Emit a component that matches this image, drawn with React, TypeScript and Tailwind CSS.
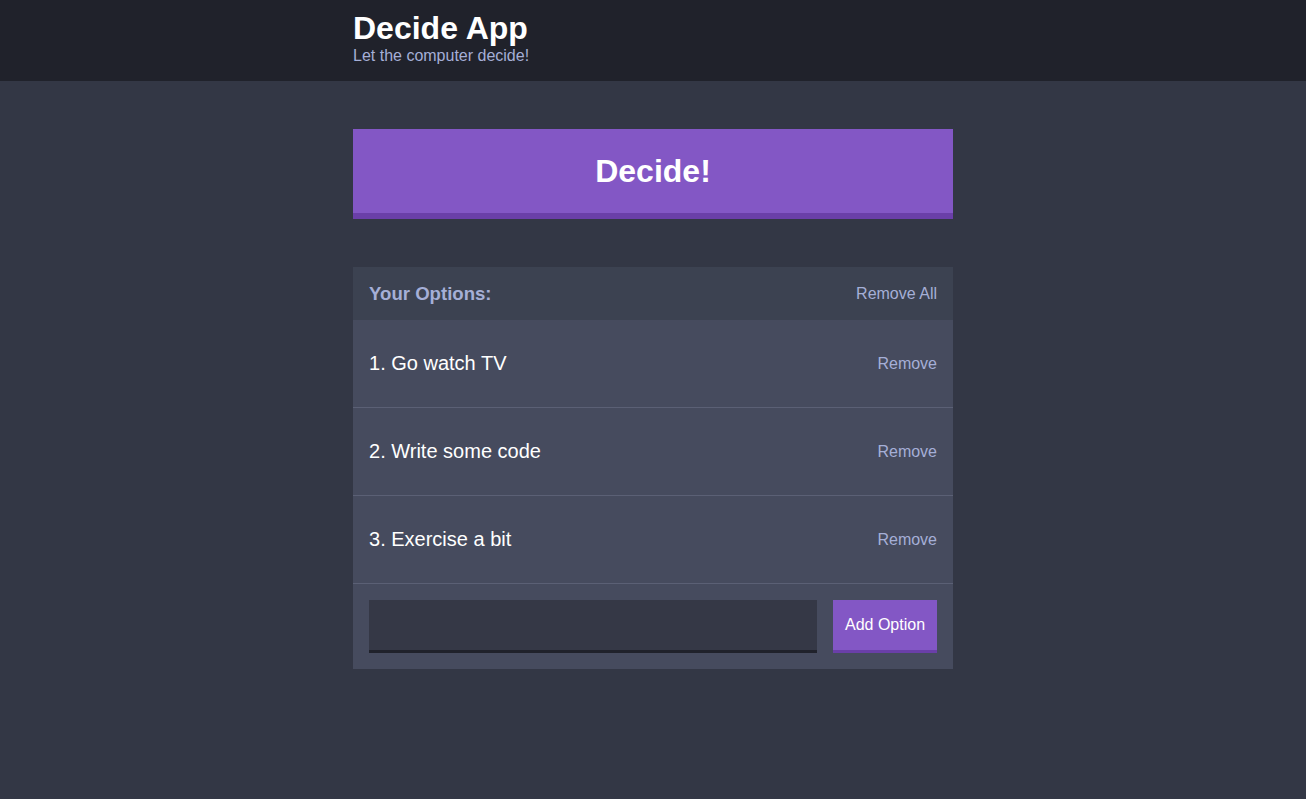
import { useState } from "react";

const initialOptions = ["Go watch TV", "Write some code", "Exercise a bit"];

export default function App() {
  const [options, setOptions] = useState<string[]>(initialOptions);
  const [draft, setDraft] = useState("");

  function addOption() {
    const value = draft.trim();
    if (value && !options.includes(value)) setOptions((list) => [...list, value]);
    setDraft("");
  }

  return (
    <div className="min-h-screen bg-[#333745] text-white font-['Liberation_Sans',Arial,sans-serif]">
      <header className="h-[81px] bg-[#20222b]">
        <div className="w-[600px] mx-auto pt-[10px]">
          <h1 className="text-[32px] font-bold leading-[37px]">Decide App</h1>
          <p className="text-[16px] leading-[18px] text-[#a5afd7]">Let the computer decide!</p>
        </div>
      </header>

      <main className="w-[600px] mx-auto pt-[48px]">
        <button
          type="button"
          className="w-full h-[90px] bg-[#8357c5] border-b-[6px] border-[#6a3fa8] text-[32px] font-bold"
        >
          Decide!
        </button>

        <section className="mt-[48px] bg-[#464b5e]">
          <div className="h-[53px] bg-[#3c4251] px-4 flex items-center justify-between text-[#a5afd7]">
            <h3 className="text-[18.6px] font-bold">Your Options:</h3>
            <button type="button" className="text-[16px]" onClick={() => setOptions([])}>
              Remove All
            </button>
          </div>

          {options.map((option, i) => (
            <div
              key={option}
              className="h-[88px] px-4 flex items-center justify-between border-b border-[#5b6075]"
            >
              <p className="text-[20px] pb-[2px]">
                {i + 1}. {option}
              </p>
              <button
                type="button"
                className="text-[16px] text-[#a5afd7]"
                onClick={() => setOptions((list) => list.filter((o) => o !== option))}
              >
                Remove
              </button>
            </div>
          ))}

          <form
            className="p-4 flex gap-4"
            onSubmit={(e) => {
              e.preventDefault();
              addOption();
            }}
          >
            <input
              value={draft}
              onChange={(e) => setDraft(e.target.value)}
              className="flex-1 h-[53px] bg-[#353846] border-b-[3px] border-[#20222b] px-3 text-[16px] text-white outline-none"
            />
            <button
              type="submit"
              className="w-[104px] h-[53px] bg-[#8357c5] border-b-[3px] border-[#6a3fa8] text-[16px]"
            >
              Add Option
            </button>
          </form>
        </section>
      </main>
    </div>
  );
}
